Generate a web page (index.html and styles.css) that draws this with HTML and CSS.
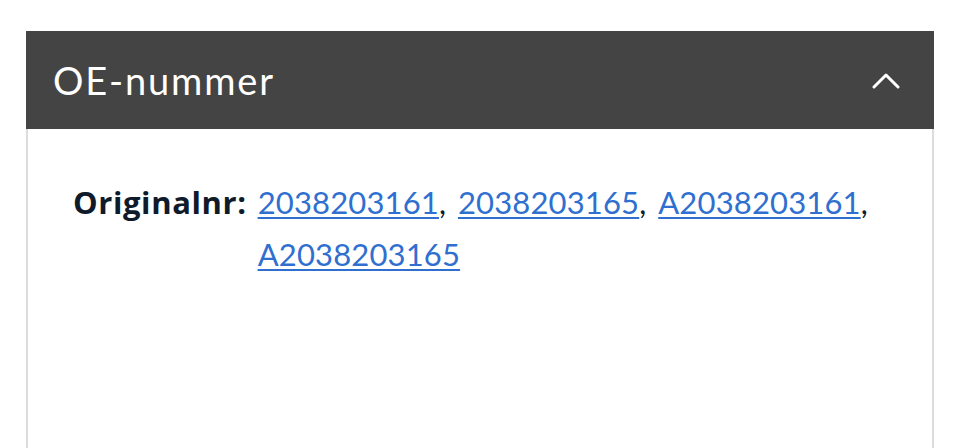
FILE: index.html
```html
<!DOCTYPE html>
<html lang="da">
<head>
<meta charset="utf-8">
<title>OE-nummer</title>
<link rel="stylesheet" href="styles.css">
</head>
<body>
<section class="panel">
  <header class="panel-head">
    <h2 class="panel-title">OE-nummer</h2>
    <svg class="chev" width="28" height="17" viewBox="0 0 28 17" aria-hidden="true">
      <path d="M2 15 L14 3 L26 15" fill="none" stroke="#fff" stroke-width="3" stroke-linecap="round" stroke-linejoin="round"/>
    </svg>
  </header>
  <div class="panel-body">
    <div class="row">
      <span class="label">Originalnr:</span>
      <span class="values"><a href="#">2038203161</a>, <a href="#">2038203165</a>, <a href="#">A2038203161</a>, <a href="#">A2038203165</a></span>
    </div>
  </div>
</section>
</body>
</html>
```
FILE: styles.css
```css
html, body {
  margin: 0;
  padding: 0;
  background: #fff;
}
body {
  padding: 31px 26px 0 26px;
  font-family: Lato, "Noto Sans", sans-serif;
}
.panel {
  border-left: 2px solid #dcdcdc;
  border-right: 2px solid #dcdcdc;
  height: 417px;
  box-sizing: border-box;
}
.panel-head {
  background: #444444;
  height: 98px;
  margin: 0 -2px;
  display: flex;
  align-items: center;
  justify-content: space-between;
  padding: 0 34px 0 27px;
}
.panel-title {
  margin: 0;
  color: #fff;
  font-weight: 400;
  font-size: 38px;
  letter-spacing: 1.85px;
}
.chev {
  display: block;
}
.panel-body {
  padding: 47px 0 0 45px;
}
.row {
  display: flex;
  font-size: 31px;
  line-height: 52px;
  color: #0f1a2a;
}
.label {
  font-family: "Open Sans", Lato, sans-serif;
  font-weight: 700;
  font-size: 31px;
  letter-spacing: 0.6px;
  margin-right: 11px;
  flex: none;
}
.values {
  width: 620px;
  word-spacing: 4px;
}
.values a {
  color: #2f6fd0;
  letter-spacing: 0.15px;
  text-decoration: underline;
  text-decoration-thickness: 2px;
  text-underline-offset: 3px;
}
```
